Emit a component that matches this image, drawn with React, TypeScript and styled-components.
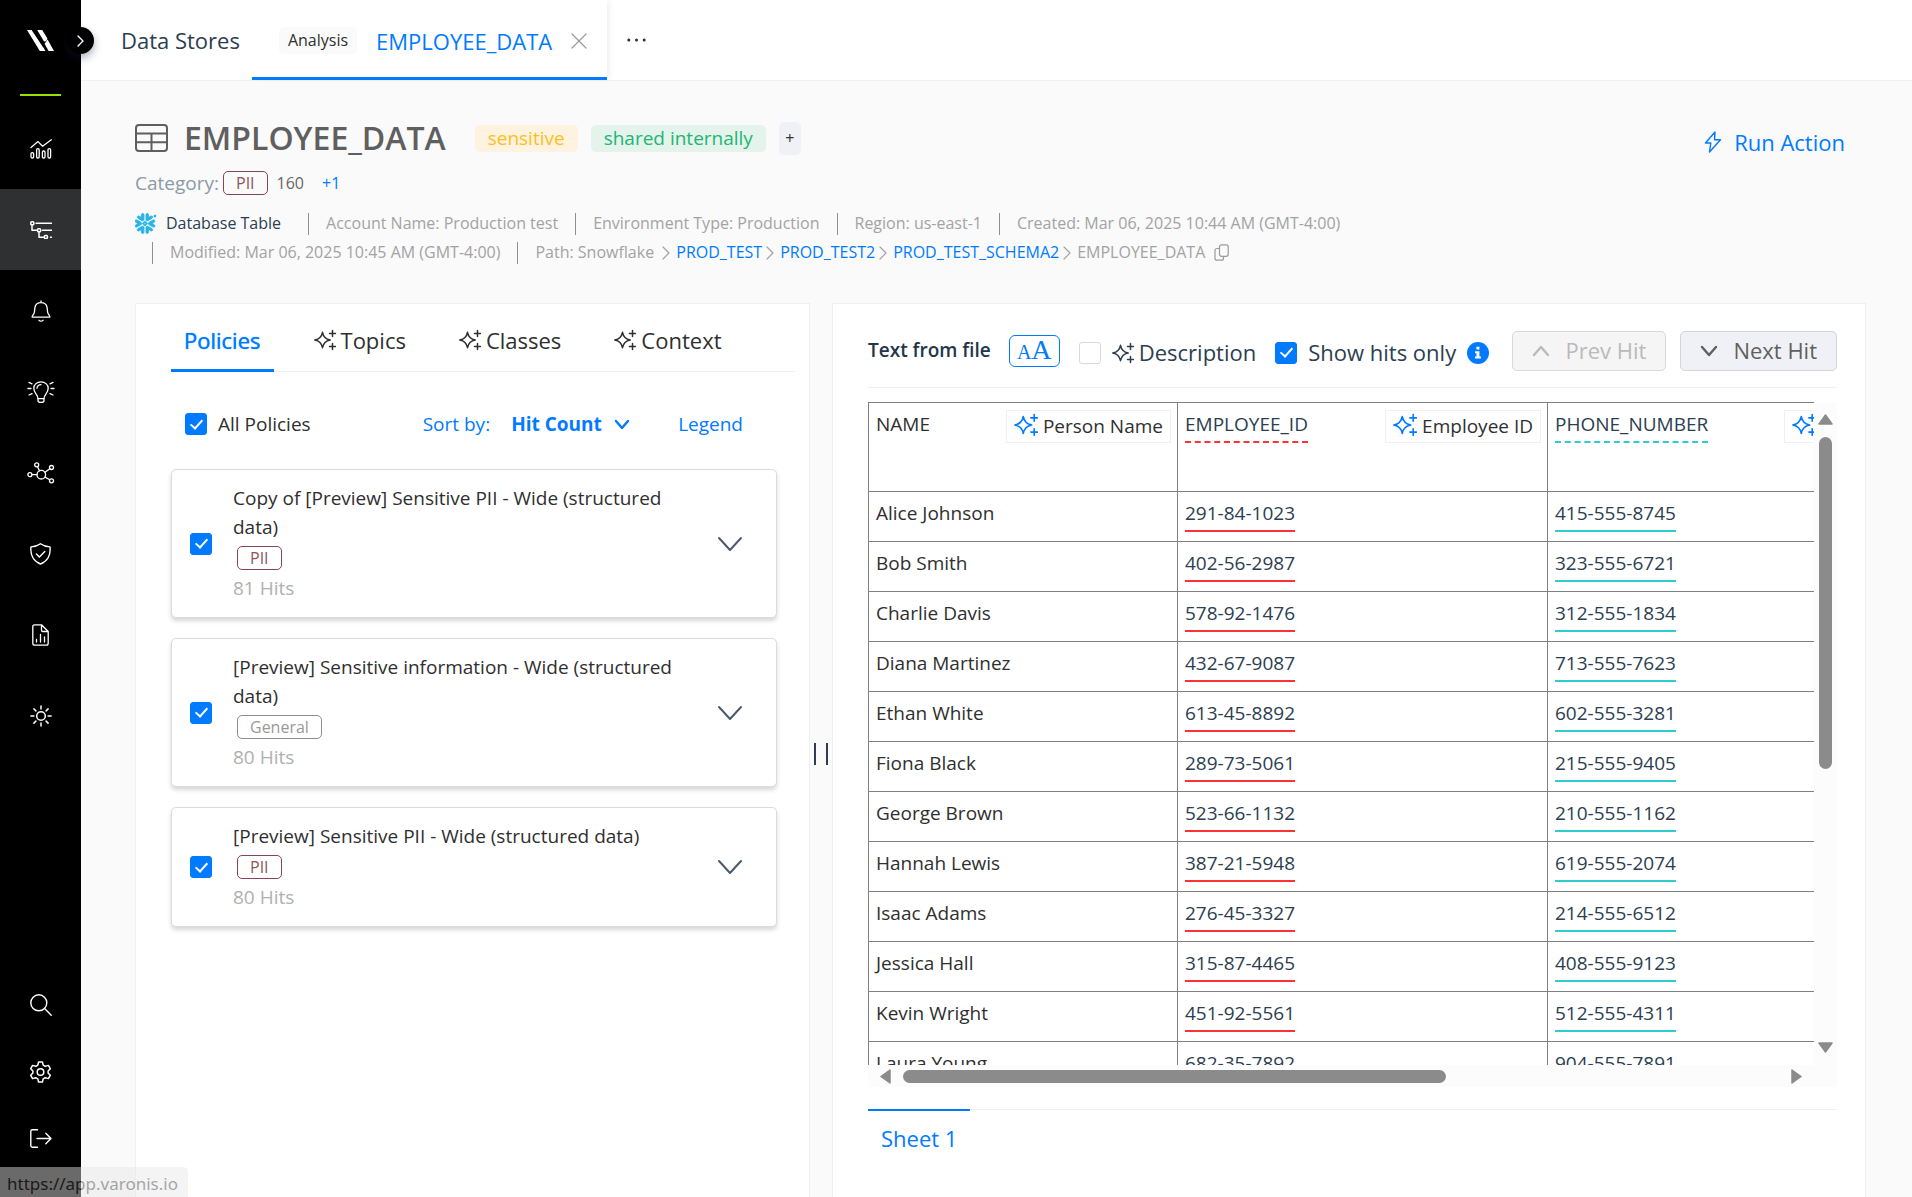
import React from "react";
import styled, { createGlobalStyle, css } from "styled-components";
import { SiSnowflake } from "react-icons/si";

const color = {
  blue: "#007aff",
  ink: "#2f2f2f",
  navy: "#2c3e50",
  muted: "#a3a3a3",
  line: "#f0f0f0",
  page: "#fafafa",
  red: "#ff3336",
  teal: "#2fcccf",
  thumb: "#8b8b8b",
};

const GlobalStyle = createGlobalStyle`
  *, *::before, *::after { box-sizing: border-box; }
  body {
    margin: 0;
    background: ${color.page};
    color: ${color.ink};
    font-family: "Open Sans", "Noto Sans", sans-serif;
    font-size: 19px;
    line-height: 29px;
  }
  button, input, select { font: inherit; color: inherit; margin: 0; }
  button { background: none; border: 0; padding: 0; cursor: pointer; white-space: nowrap; }
  a { color: inherit; text-decoration: none; }
  svg { display: block; flex: none; }
`;

/* ---------- shell ---------- */

const Shell = styled.div`
  display: flex;
  height: 100vh;
  overflow: hidden;
`;

const Sidebar = styled.aside`
  position: relative;
  flex: none;
  display: flex;
  flex-direction: column;
  width: 81px;
  padding-bottom: 25px;
  background: #000;
  color: #fff;
  z-index: 2;
`;

const Brand = styled.div`
  display: flex;
  flex-direction: column;
  align-items: center;
  height: 108px;
  padding-top: 30px;

  &::after {
    content: "";
    width: 41px;
    height: 2px;
    margin-top: 43px;
    background: #97e000;
  }
`;

const Expand = styled.button`
  position: absolute;
  top: 27px;
  right: -13px;
  display: grid;
  place-items: center;
  width: 27px;
  height: 27px;
  border-radius: 50%;
  background: #000;
  color: #fff;
  box-shadow: 0 4px 8px rgba(20, 30, 60, 0.35);
`;

const Nav = styled.nav`
  display: flex;
  flex-direction: column;
  &:last-of-type { margin-top: auto; }
`;

const NavItem = styled.a<{ $active?: boolean; $compact?: boolean }>`
  display: grid;
  place-items: center;
  height: ${(p) => (p.$compact ? 67 : 81)}px;
  background: ${(p) => (p.$active ? "#2f3032" : "transparent")};
`;

const Main = styled.main`
  flex: 1;
  min-width: 0;
  display: flex;
  flex-direction: column;
`;

/* ---------- top tabs ---------- */

const TopBar = styled.div`
  flex: none;
  display: flex;
  height: 81px;
  background: #fff;
  border-bottom: 1px solid #f0f1f6;
  font-size: 22px;
  line-height: 30px;
`;

const StoresLink = styled.a`
  display: flex;
  align-items: center;
  padding: 0 12px 0 40px;
  color: ${color.navy};
`;

const OpenTab = styled.div`
  display: flex;
  align-items: center;
  gap: 19px;
  padding: 4px 20px 0 27px;
  border-bottom: 3px solid ${color.blue};
  color: ${color.blue};
  box-shadow: 4px 0 6px -2px rgba(0, 0, 0, 0.07);
`;

const Kind = styled.span`
  padding: 0 9px;
  border-radius: 5px;
  background: ${color.page};
  color: ${color.ink};
  font-size: 16px;
  line-height: 27px;
`;

const IconButton = styled.button<{ $dark?: boolean }>`
  display: grid;
  place-items: center;
  color: ${(p) => (p.$dark ? "#4a5a6e" : "#9b9b9b")};
`;

const MoreButton = styled(IconButton)`
  padding: 0 20px;
  color: ${color.ink};
`;

/* ---------- page header ---------- */

const Header = styled.header`
  flex: none;
  display: flex;
  justify-content: space-between;
  align-items: flex-start;
  padding: 35px 67px 36px 54px;
`;

const HeaderInfo = styled.div`
  flex: 1;
  min-width: 0;
`;

const TitleRow = styled.div`
  display: flex;
  align-items: center;
  height: 44px;
  svg { color: #5f5f5f; }
`;

const Title = styled.h1`
  margin: 0 29px 0 16px;
  color: #5f5f5f;
  font-size: 32px;
  font-weight: 600;
  line-height: 44px;
`;

const Label = styled.span<{ $tone: "amber" | "green" }>`
  margin-right: 13px;
  padding: 0 13px;
  border-radius: 5px;
  line-height: 27px;
  ${(p) =>
    p.$tone === "amber"
      ? css`background: #fdf3e0; color: #ffbf1a;`
      : css`background: #e4f4ec; color: #22b573;`}
`;

const AddButton = styled.button`
  width: 22px;
  height: 33px;
  border-radius: 5px;
  background: #f0f1f6;
  font-size: 16px;
`;

const CategoryRow = styled.div`
  display: flex;
  align-items: center;
  height: 30px;
  margin: 8px 0 11px;
  color: #8e99a8;
`;

const Tag = styled.span<{ $neutral?: boolean }>`
  display: inline-block;
  margin: 0 4px;
  padding: 0 12px;
  border: 1px solid ${(p) => (p.$neutral ? "#8e8e8e" : "#854558")};
  border-radius: 5px;
  color: ${(p) => (p.$neutral ? "#999" : "#8b5560")};
  font-size: 16px;
  line-height: 22px;
`;

const Count = styled.span`
  margin: 0 18px 0 5px;
  color: #666;
  font-size: 16px;
`;

const MoreLink = styled.a`
  color: ${color.blue};
  font-size: 16px;
`;

const Meta = styled.div`
  display: flex;
  flex-wrap: wrap;
  max-width: 1440px;
  color: ${color.muted};
  font-size: 16px;
`;

const MetaKind = styled.div`
  display: flex;
  align-items: center;
  gap: 10px;
  margin-right: 10px;
  color: ${color.navy};

  svg { color: #29b5e8; stroke: #29b5e8; stroke-width: 1px; }
`;

const MetaItem = styled.div`
  display: flex;
  align-items: center;
  margin-left: 17px;

  &::before {
    content: "";
    width: 1px;
    height: 22px;
    margin-right: 17px;
    background: #8f8f8f;
  }
  a { color: ${color.blue}; }
`;

const Crumb = styled.span`
  display: flex;
  align-items: center;
  svg { margin: 0 6px 0 4px; }
`;

const RunAction = styled.button`
  display: flex;
  align-items: center;
  gap: 12px;
  margin-top: 11px;
  color: ${color.blue};
  font-size: 22px;
  line-height: 30px;
`;

/* ---------- panels ---------- */

const Panels = styled.div`
  flex: 1;
  min-height: 0;
  display: grid;
  grid-template-columns: minmax(0, 675fr) 22px minmax(0, 1034fr);
  padding: 0 46px 0 54px;
`;

const Panel = styled.section`
  display: flex;
  flex-direction: column;
  min-height: 0;
  background: #fff;
  border: 1px solid ${color.line};
  border-bottom: 0;
`;

const PolicyPanel = styled(Panel)`
  padding: 0 14px 0 35px;
`;

const TextPanel = styled(Panel)`
  padding: 0 28px 0 35px;
`;

const Splitter = styled.div`
  display: flex;
  align-items: center;
  justify-content: center;
  gap: 10px;
  padding-top: 8px;

  &::before, &::after {
    content: "";
    width: 2px;
    height: 22px;
    background: ${color.navy};
  }
`;

const TabList = styled.div`
  display: flex;
  gap: 27px;
  height: 68px;
  border-bottom: 1px solid ${color.line};
`;

const Tab = styled.button<{ $active?: boolean }>`
  display: flex;
  align-items: center;
  gap: 5px;
  height: 68px;
  padding: 7px 13px 0;
  border-bottom: 3px solid ${(p) => (p.$active ? color.blue : "transparent")};
  color: ${(p) => (p.$active ? color.blue : color.ink)};
  text-shadow: ${(p) => (p.$active ? "0 0 1px currentColor" : "none")};
  font-size: 22px;
  line-height: 30px;
`;

const FilterRow = styled.div`
  display: flex;
  align-items: center;
  height: 30px;
  margin: 37px 52px 30px 14px;
  color: ${color.blue};
`;

const CheckLabel = styled.label<{ $large?: boolean }>`
  display: flex;
  align-items: center;
  gap: 11px;
  color: ${(p) => (p.$large ? color.navy : color.ink)};
  font-size: ${(p) => (p.$large ? 22 : 19)}px;
  white-space: nowrap;
`;

const Checkbox = styled.input.attrs({ type: "checkbox" })`
  appearance: none;
  flex: none;
  display: grid;
  place-items: center;
  width: 22px;
  height: 22px;
  border: 1px solid #d9d9d9;
  border-radius: 3px;
  background: #fff;

  &:checked {
    border-color: ${color.blue};
    background: ${color.blue};
  }
  &:checked::after {
    content: "";
    width: 7px;
    height: 12px;
    margin-bottom: 3px;
    border: solid #fff;
    border-width: 0 2px 2px 0;
    transform: rotate(42deg);
  }
`;

const SortLabel = styled.label`
  margin-left: auto;
`;

const SortBox = styled.div`
  display: flex;
  align-items: center;
  margin: 0 48px 0 21px;

  svg { margin-left: -16px; pointer-events: none; }
`;

const SortSelect = styled.select`
  appearance: none;
  padding: 0 28px 0 0;
  border: 0;
  background: transparent;
  color: ${color.blue};
  font-weight: 700;
  line-height: 29px;
`;

const PolicyList = styled.ul`
  display: grid;
  gap: 20px;
  margin: 0 18px 0 0;
  padding: 0;
  list-style: none;
`;

const PolicyCard = styled.li`
  display: flex;
  align-items: center;
  padding: 14px 33px 14px 18px;
  border: 1px solid #d9dce6;
  border-radius: 5px;
  background: #fff;
  box-shadow: 0 3px 4px rgba(0, 0, 0, 0.16);
`;

const PolicyBody = styled.label`
  flex: 1;
  display: flex;
  flex-direction: column;
  align-items: flex-start;
  padding: 0 34px 0 21px;

  ${Tag} { margin-top: 4px; margin-bottom: 4px; }
`;

const Hits = styled.span`
  color: #b0b0b0;
`;

/* ---------- text viewer ---------- */

const Toolbar = styled.div`
  flex: none;
  display: flex;
  align-items: center;
  height: 84px;
  padding-top: 10px;
  border-bottom: 1px solid ${color.line};
`;

const ToolbarTitle = styled.h2`
  margin: 0 18px 0 0;
  color: #22364a;
  font-size: 19px;
  font-weight: 600;
  white-space: nowrap;
`;

const TextSize = styled.button`
  width: 51px;
  height: 32px;
  margin-right: 19px;
  border: 1px solid ${color.blue};
  border-radius: 6px;
  color: ${color.blue};
  font-family: "Liberation Serif", serif;
  font-size: 28px;
  line-height: 28px;

  small { font-size: 20px; }
`;

const Options = styled.div`
  display: flex;
  align-items: center;
  gap: 19px;
  padding-top: 4px;
`;

const WithIcon = styled.span`
  display: flex;
  align-items: center;
  gap: 5px;
`;

const HitButtons = styled.div`
  display: flex;
  gap: 14px;
  margin-left: auto;
`;

const HitButton = styled.button`
  display: flex;
  align-items: center;
  gap: 15px;
  height: 40px;
  padding: 0 19px;
  border: 1px solid #d4d5da;
  border-radius: 5px;
  background: #f0f1f6;
  color: #5f5f5f;
  font-size: 22px;

  &:disabled {
    border-color: #d9d9d9;
    background: #f5f5f5;
    color: #bababa;
  }
`;

const Viewer = styled.div`
  flex: 1;
  min-height: 0;
  display: grid;
  grid-template: minmax(0, 1fr) 22px / minmax(0, 1fr) 23px;
  margin: 14px 0 22px;
  background: #fcfcfc;
`;

const Sheet = styled.div`
  overflow: hidden;
  background: #fff;
`;

const Table = styled.table`
  width: 1546px;
  table-layout: fixed;
  border-collapse: collapse;
  line-height: 26px;

  th, td {
    height: 50px;
    padding: 8px 6px 0 7px;
    border: 1px solid #808080;
    font-weight: 400;
    text-align: left;
    vertical-align: top;
  }
  th { height: 89px; }
`;

const HeadCell = styled.div`
  display: flex;
  justify-content: space-between;
  align-items: flex-start;
`;

const Hit = styled.span<{ $tone: string; $dashed?: boolean }>`
  display: inline-block;
  padding-bottom: 4px;
  border-bottom: 2px ${(p) => (p.$dashed ? "dashed" : "solid")} ${(p) => p.$tone};
  color: ${color.navy};
`;

const ClassBox = styled.span`
  display: flex;
  align-items: center;
  gap: 5px;
  height: 33px;
  margin-top: -1px;
  padding: 0 7px 2px;
  border: 1px solid ${color.line};
  white-space: nowrap;

  svg { color: ${color.blue}; margin-bottom: 1px; }
`;

const ScrollY = styled.div`
  display: flex;
  flex-direction: column;
  align-items: center;
  padding: 12px 0;
`;

const ScrollX = styled.div`
  display: flex;
  align-items: center;
  padding: 0 12px;
`;

const Track = styled.div<{ $vertical?: boolean }>`
  flex: 1;
  display: flex;
  flex-direction: ${(p) => (p.$vertical ? "column" : "row")};
  margin: 12px;
`;

const Thumb = styled.div<{ $share: number }>`
  flex: 0 0 ${(p) => p.$share}%;
  min-width: 13px;
  min-height: 13px;
  border-radius: 7px;
  background: ${color.thumb};
`;

const SheetTabs = styled.div`
  flex: none;
  display: flex;
  height: 88px;
  border-top: 1px solid ${color.line};
`;

const SheetTab = styled.button`
  height: 57px;
  margin-top: -1px;
  padding: 0 13px;
  border-top: 2px solid ${color.blue};
  color: ${color.blue};
  font-size: 22px;
`;

const StatusUrl = styled.div`
  position: fixed;
  left: 0;
  bottom: 0;
  z-index: 5;
  padding: 4px 10px 0 7px;
  border-radius: 0 5px 0 0;
  background: #e6e6e6;
  color: #3c3c3c;
  font-family: "Noto Sans", "Open Sans", sans-serif;
  font-size: 17px;
  line-height: 26px;
  opacity: 0.46;
`;

/* ---------- icons ---------- */

type LineProps = {
  w: number;
  h: number;
  sw?: number;
  box?: string;
  children: React.ReactNode;
};

const Line = ({ w, h, sw = 1.3, box, children }: LineProps) => (
  <svg
    width={w}
    height={h}
    viewBox={box ?? `0 0 ${w} ${h}`}
    fill="none"
    stroke="currentColor"
    strokeWidth={sw}
    strokeLinecap="round"
    strokeLinejoin="round"
    aria-hidden="true"
  >
    {children}
  </svg>
);

const Logo = () => (
  <svg width="27" height="21" viewBox="0 0 27 21" fill="#fff" aria-hidden="true">
    <path d="M0 0h4.6l12.6 19-1 1.9h-3.4z" />
    <path d="M10.2 0h5l5.2 8.6-1.2 2.6-2.2.2z" />
    <path d="M20.6 9.6 27 21h-5.4l-4-7.2z" />
    <path d="m16.4 17.4 2 3.6h-4z" />
  </svg>
);

const ChartIcon = () => (
  <Line w={22} h={20}>
    <path d="M1 8.5 8 2.6l4.6 4.6L21.3.8" />
    <rect x="1" y="13.6" width="2.6" height="5.4" rx="1.2" />
    <rect x="6.6" y="9.6" width="2.6" height="9.4" rx="1.2" />
    <rect x="12.4" y="12" width="2.6" height="7" rx="1.2" />
    <rect x="18" y="9.6" width="2.6" height="9.4" rx="1.2" />
  </Line>
);

const TreeIcon = () => (
  <Line w={22} h={18} sw={1.5}>
    <rect x=".8" y=".8" width="3" height="3" rx=".8" />
    <path d="M6 2.3h15.5M2 4.5v4.7h5M12.5 9.2h9M9 11.5v4.7h4.500M20.5 16.2h1" />
    <rect x="7.6" y="7.7" width="3" height="3" rx=".8" />
    <rect x="14.4" y="14.4" width="3" height="3" rx=".8" />
  </Line>
);

const BellIcon = () => (
  <Line w={20} h={22}>
    <path d="M10 .8v1.600M1.200 17.200h17.600M1.200 17.200c-.6-1.600 1.800-2.200 2.200-5.200l.5-4.400C4.400 4.600 7 2.600 10 2.600s5.600 2 6.100 5l.5 4.400c.4 3 2.800 3.600 2.200 5.200M8 20.300c1 1.200 3 1.200 4 0" />
  </Line>
);

const BulbIcon = () => (
  <Line w={28} h={22}>
    <path d="M11 17.500c0-4-4.200-5-4.200-10.200C6.800 3.500 10 .8 14 .8s7.200 2.700 7.200 6.500c0 5.200-4.200 6.200-4.200 10.200M10 7.200c.2-2.200 1.800-3.500 4-3.600" />
    <path d="M11 17.700h6v2c0 2.200-6 2.200-6 0z" />
    <path d="M1 7.500h3M24 7.500h3M2 1.400l3 1.400M26 1.400l-3 1.400M2 14l3-1.400M26 14l-3-1.400" />
  </Line>
);

const HubIcon = () => (
  <Line w={28} h={22}>
    <circle cx="14.3" cy="12.7" r="4.3" />
    <circle cx="2.9" cy="12.7" r="2" />
    <circle cx="9.7" cy="2.8" r="2" />
    <circle cx="24.5" cy="5.5" r="2" />
    <circle cx="24.5" cy="18.8" r="2" />
    <path d="M5 12.700h5M10.500 4.700l2 4.100M18 10.300l4.800-3.600M18 15.100l4.800 2.700" />
  </Line>
);

const ShieldIcon = () => (
  <Line w={21} h={22} sw={1.4}>
    <path d="M10.500.8C8 2.700 4.500 3.700 1 3.900c-.9 8 2.500 14.500 9.500 17.100 7-2.600 10.400-9.100 9.500-17.100C16.500 3.700 13 2.700 10.500.8z" />
    <path d="m6.400 11 3 3 5.400-5.600" />
  </Line>
);

const ReportIcon = () => (
  <Line w={17} h={22}>
    <path d="M9.500.8H2.800c-1.200 0-2 .7-2 1.900v16.600c0 1.200.8 1.900 2 1.900h11.400c1.200 0 2-.7 2-1.900V7.500zM9.500.8v5.400c0 .8.500 1.300 1.300 1.300h5.400M4.500 15.500V18M8.500 10.500V18M12.500 13V18" />
  </Line>
);

const SunIcon = () => (
  <Line w={22} h={22} sw={1.5}>
    <circle cx="11" cy="11" r="4.3" />
    <path d="M11 .9v3M11 18.100v3M.9 11h3M18.100 11h3M3.900 3.900l2 2M16.100 16.100l2 2M3.900 18.100l2-2M16.100 5.900l2-2" />
  </Line>
);

const SearchIcon = () => (
  <Line w={22} h={22} sw={1.4}>
    <circle cx="8.8" cy="8.8" r="8" />
    <path d="m14.600 14.600 6.600 6.600" />
  </Line>
);

const GearIcon = () => (
  <Line w={21} h={22} sw={1.5}>
    <circle cx="10.5" cy="11" r="3.3" />
    <path d="M8.600.9h3.800l.8 3.200 2 1.200 3.200-.9 1.900 3.300-2.200 2.300v2l2.200 2.300-1.900 3.300-3.200-.9-2 1.200-.8 3.200H8.600l-.8-3.200-2-1.200-3.200.9-1.900-3.300L2.900 12v-2L.7 7.700l1.900-3.300 3.200.9 2-1.200z" />
  </Line>
);

const ExitIcon = () => (
  <Line w={22} h={19} sw={1.4}>
    <path d="M7.500.8H2.400C1.400.8.8 1.400.8 2.400v14.200c0 1 .6 1.600 1.600 1.600h5.100M7 9.500h14M15.800 4.300 21 9.500l-5.200 5.200" />
  </Line>
);

const Sparkle = ({ size = 22 }: { size?: number }) => (
  <Line w={size} h={size} box="0 0 22 22" sw={1.5}>
    <path d="M8.500 3.300C9.400 8 11.500 10.100 16.200 11 11.500 11.900 9.400 14 8.500 18.700 7.600 14 5.500 11.900.8 11 5.500 10.100 7.600 8 8.500 3.300z" />
    <path d="M18.500 1.500v6M15.500 4.500h6M18.500 14.500v6M15.500 17.500h6" />
  </Line>
);

const TableIcon = () => (
  <Line w={33} h={28} sw={2}>
    <rect x="1" y="1" width="31" height="26" rx="3" />
    <path d="M1 9.500h31M1 18.300h31M16.500 9.500V27" />
  </Line>
);

const Bolt = () => (
  <Line w={18} h={22} sw={1.4}>
    <path d="M11 1 1.500 12h5.300L5.500 21 16.500 8.700h-6z" />
  </Line>
);

const CrumbArrow = () => (
  <Line w={8} h={14} sw={1.2}>
    <path d="m1 1 6 6-6 6" />
  </Line>
);

const CopyIcon = () => (
  <Line w={15} h={17} sw={1.2}>
    <rect x="5.5" y=".8" width="8.7" height="11.5" rx="2" />
    <path d="M5.500 4.500H3c-1.200 0-2 .8-2 2v7.700c0 1.200.8 2 2 2h4.500c1.200 0 2-.8 2-2v-1.800" />
  </Line>
);

const Chevron = ({ w, h, sw, up }: { w: number; h: number; sw: number; up?: boolean }) => (
  <Line w={w} h={h} sw={sw}>
    <path d={up ? `M2 ${h - 2} ${w / 2} 2l${w / 2 - 2} ${h - 4}` : `M2 2l${w / 2 - 2} ${h - 4}L${w - 2} 2`} />
  </Line>
);

const InfoIcon = () => (
  <svg width="22" height="22" viewBox="0 0 22 22" aria-hidden="true">
    <circle cx="11" cy="11" r="11" fill={color.blue} />
    <path d="M9.400 4.800h3v2.700h-3zM8 9.200h4.400v5.300h1.500v2H8v-2h1.500v-3.300H8z" fill="#fff" />
  </svg>
);

const Arrow = ({ d, w, h }: { d: string; w: number; h: number }) => (
  <svg width={w} height={h} viewBox={`0 0 ${w} ${h}`} aria-hidden="true">
    <path d={d} fill={color.thumb} stroke={color.thumb} strokeWidth="1.5" strokeLinejoin="round" />
  </svg>
);

/* ---------- data ---------- */

const mainNav = [
  { name: "Dashboards", icon: <ChartIcon /> },
  { name: "Data Stores", icon: <TreeIcon />, active: true },
  { name: "Alerts", icon: <BellIcon /> },
  { name: "Insights", icon: <BulbIcon /> },
  { name: "Connections", icon: <HubIcon /> },
  { name: "Policies", icon: <ShieldIcon /> },
  { name: "Reports", icon: <ReportIcon /> },
  { name: "Automations", icon: <SunIcon /> },
];

const footNav = [
  { name: "Search", icon: <SearchIcon /> },
  { name: "Settings", icon: <GearIcon /> },
  { name: "Sign out", icon: <ExitIcon /> },
];

const policies = [
  { title: "Copy of [Preview] Sensitive PII - Wide (structured data)", tag: "PII", hits: 81 },
  { title: "[Preview] Sensitive information - Wide (structured data)", tag: "General", hits: 80 },
  { title: "[Preview] Sensitive PII - Wide (structured data)", tag: "PII", hits: 80 },
];

const people = [
  ["Alice Johnson", "291-84-1023", "415-555-8745"],
  ["Bob Smith", "402-56-2987", "323-555-6721"],
  ["Charlie Davis", "578-92-1476", "312-555-1834"],
  ["Diana Martinez", "432-67-9087", "713-555-7623"],
  ["Ethan White", "613-45-8892", "602-555-3281"],
  ["Fiona Black", "289-73-5061", "215-555-9405"],
  ["George Brown", "523-66-1132", "210-555-1162"],
  ["Hannah Lewis", "387-21-5948", "619-555-2074"],
  ["Isaac Adams", "276-45-3327", "214-555-6512"],
  ["Jessica Hall", "315-87-4465", "408-555-9123"],
  ["Kevin Wright", "451-92-5561", "512-555-4311"],
  ["Laura Young", "682-35-7892", "904-555-7891"],
];

/* ---------- page ---------- */

export default function App() {
  return (
    <>
      <GlobalStyle />
      <Shell>
        <Sidebar>
          <Brand><Logo /></Brand>
          <Expand aria-label="Expand menu">
            <Line w={7} h={12} sw={1.4}><path d="m1 1 5 5-5 5" /></Line>
          </Expand>
          <Nav>
            {mainNav.map((n) => (
              <NavItem key={n.name} href="#" aria-label={n.name} $active={n.active}>{n.icon}</NavItem>
            ))}
          </Nav>
          <Nav>
            {footNav.map((n) => (
              <NavItem key={n.name} href="#" aria-label={n.name} $compact>{n.icon}</NavItem>
            ))}
          </Nav>
        </Sidebar>

        <Main>
          <TopBar>
            <StoresLink href="#">Data Stores</StoresLink>
            <OpenTab>
              <Kind>Analysis</Kind>
              <a href="#">EMPLOYEE_DATA</a>
              <IconButton aria-label="Close tab">
                <Line w={16} h={16} sw={1.2}><path d="m1 1 14 14M15 1 1 15" /></Line>
              </IconButton>
            </OpenTab>
            <MoreButton aria-label="More tabs">
              <svg width="19" height="4" viewBox="0 0 19 4" fill="currentColor" aria-hidden="true">
                <circle cx="1.8" cy="2" r="1.5" /><circle cx="9.5" cy="2" r="1.5" /><circle cx="17.2" cy="2" r="1.5" />
              </svg>
            </MoreButton>
          </TopBar>

          <Header>
            <HeaderInfo>
              <TitleRow>
                <TableIcon />
                <Title>EMPLOYEE_DATA</Title>
                <Label $tone="amber">sensitive</Label>
                <Label $tone="green">shared internally</Label>
                <AddButton>+</AddButton>
              </TitleRow>
              <CategoryRow>
                Category:
                <Tag>PII</Tag>
                <Count>160</Count>
                <MoreLink href="#">+1</MoreLink>
              </CategoryRow>
              <Meta>
                <MetaKind><SiSnowflake size={21} />Database Table</MetaKind>
                <MetaItem>Account Name: Production test</MetaItem>
                <MetaItem>Environment Type: Production</MetaItem>
                <MetaItem>Region: us-east-1</MetaItem>
                <MetaItem>Created: Mar 06, 2025 10:44 AM (GMT-4:00)</MetaItem>
                <MetaItem>Modified: Mar 06, 2025 10:45 AM (GMT-4:00)</MetaItem>
                <MetaItem>
                  <Crumb>Path: Snowflake&nbsp;<CrumbArrow /></Crumb>
                  <Crumb><a href="#">PROD_TEST</a><CrumbArrow /></Crumb>
                  <Crumb><a href="#">PROD_TEST2</a><CrumbArrow /></Crumb>
                  <Crumb><a href="#">PROD_TEST_SCHEMA2</a><CrumbArrow /></Crumb>
                  EMPLOYEE_DATA&nbsp;&nbsp;
                  <IconButton aria-label="Copy path"><CopyIcon /></IconButton>
                </MetaItem>
              </Meta>
            </HeaderInfo>
            <RunAction><Bolt />Run Action</RunAction>
          </Header>

          <Panels>
            <PolicyPanel>
              <TabList role="tablist">
                <Tab role="tab" aria-selected="true" $active>Policies</Tab>
                <Tab role="tab"><Sparkle />Topics</Tab>
                <Tab role="tab"><Sparkle />Classes</Tab>
                <Tab role="tab"><Sparkle />Context</Tab>
              </TabList>
              <FilterRow>
                <CheckLabel><Checkbox defaultChecked />All Policies</CheckLabel>
                <SortLabel htmlFor="sort">Sort by:</SortLabel>
                <SortBox>
                  <SortSelect id="sort"><option>Hit Count</option></SortSelect>
                  <Chevron w={16} h={11} sw={2.4} />
                </SortBox>
                <a href="#">Legend</a>
              </FilterRow>
              <PolicyList>
                {policies.map((p, i) => (
                  <PolicyCard key={p.title}>
                    <Checkbox id={`policy-${i}`} defaultChecked />
                    <PolicyBody htmlFor={`policy-${i}`}>
                      <span>{p.title}</span>
                      <Tag $neutral={p.tag === "General"}>{p.tag}</Tag>
                      <Hits>{p.hits} Hits</Hits>
                    </PolicyBody>
                    <IconButton aria-label="Expand policy" $dark>
                      <Chevron w={26} h={16} sw={2} />
                    </IconButton>
                  </PolicyCard>
                ))}
              </PolicyList>
            </PolicyPanel>

            <Splitter role="separator" aria-orientation="vertical" />

            <TextPanel>
              <Toolbar>
                <ToolbarTitle>Text from file</ToolbarTitle>
                <TextSize aria-label="Text size"><small>A</small>A</TextSize>
                <Options>
                  <CheckLabel $large><Checkbox /><WithIcon><Sparkle />Description</WithIcon></CheckLabel>
                  <CheckLabel $large><Checkbox defaultChecked />Show hits only<InfoIcon /></CheckLabel>
                </Options>
                <HitButtons>
                  <HitButton disabled><Chevron w={18} h={12} sw={2.4} up />Prev Hit</HitButton>
                  <HitButton><Chevron w={18} h={12} sw={2.4} />Next Hit</HitButton>
                </HitButtons>
              </Toolbar>

              <Viewer>
                <Sheet>
                  <Table>
                    <colgroup>
                      <col width="309" /><col width="370" /><col width="423" /><col width="444" />
                    </colgroup>
                    <thead>
                      <tr>
                        <th><HeadCell>NAME<ClassBox><Sparkle size={24} />Person Name</ClassBox></HeadCell></th>
                        <th><HeadCell><Hit $tone={color.red} $dashed>EMPLOYEE_ID</Hit><ClassBox><Sparkle size={24} />Employee ID</ClassBox></HeadCell></th>
                        <th><HeadCell><Hit $tone={color.teal} $dashed>PHONE_NUMBER</Hit><ClassBox><Sparkle size={24} />Phone Number</ClassBox></HeadCell></th>
                        <th />
                      </tr>
                    </thead>
                    <tbody>
                      {people.map(([name, id, phone]) => (
                        <tr key={name}>
                          <td>{name}</td>
                          <td><Hit $tone={color.red}>{id}</Hit></td>
                          <td><Hit $tone={color.teal}>{phone}</Hit></td>
                          <td />
                        </tr>
                      ))}
                    </tbody>
                  </Table>
                </Sheet>
                <ScrollY>
                  <Arrow w={15} h={11} d="M7.500 1 14 10H1z" />
                  <Track $vertical><Thumb $share={56} /></Track>
                  <Arrow w={15} h={11} d="M7.500 10 14 1H1z" />
                </ScrollY>
                <ScrollX>
                  <Arrow w={11} h={15} d="M1 7.500 10 1v13z" />
                  <Track><Thumb $share={62} /></Track>
                  <Arrow w={11} h={15} d="M10 7.500 1 1v13z" />
                </ScrollX>
              </Viewer>

              <SheetTabs role="tablist">
                <SheetTab role="tab" aria-selected="true">Sheet 1</SheetTab>
              </SheetTabs>
            </TextPanel>
          </Panels>
        </Main>
      </Shell>
      <StatusUrl>https://app.varonis.io</StatusUrl>
    </>
  );
}
